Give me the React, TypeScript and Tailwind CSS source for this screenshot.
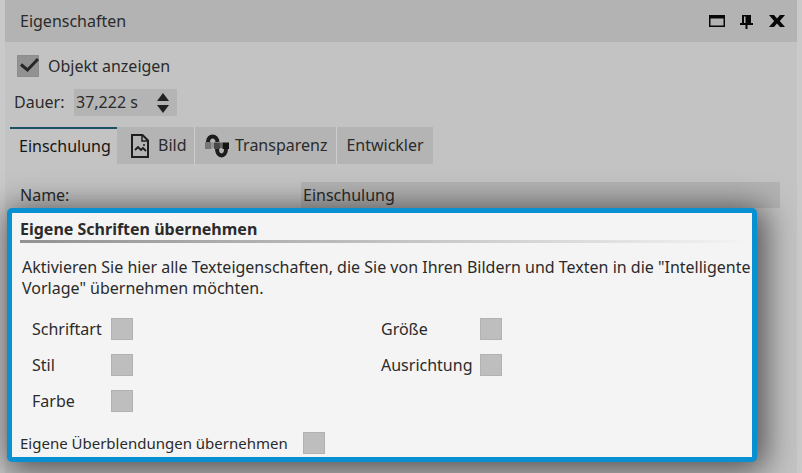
import { useState } from "react";

const boxClass =
  "size-[22px] shrink-0 appearance-none border border-[#b2b2b2] bg-[#bebebe] checked:bg-[#8c8c8c]";

function FontOption({ id, label }: { id: string; label: string }) {
  return (
    <div className="flex h-9 items-center">
      <label htmlFor={id} className="w-[79px] shrink-0 whitespace-nowrap">
        {label}
      </label>
      <input id={id} type="checkbox" className={boxClass} />
    </div>
  );
}

function AlignedOption({ id, label }: { id: string; label: string }) {
  return (
    <div className="flex h-9 items-center">
      <label htmlFor={id} className="w-[99px] shrink-0 whitespace-nowrap">
        {label}
      </label>
      <input id={id} type="checkbox" className={boxClass} />
    </div>
  );
}

function ImageFileIcon() {
  return (
    <svg width="20" height="26" viewBox="0 0 20 26" fill="none" stroke="#1e1e1e" strokeWidth="2" aria-hidden="true">
      <path d="M2 2h10.500l5.500 5.500V24H2z" />
      <path d="M12 2v6h6" strokeWidth="1.500" />
      <path d="M5 17l3-3 3 3 2-2 3 3" strokeWidth="1.800" />
      <circle cx="14" cy="12" r="1" fill="#1e1e1e" stroke="none" />
    </svg>
  );
}

function CurveIcon() {
  return (
    <svg width="24" height="24" viewBox="0 0 24 24" aria-hidden="true">
      <path d="M3 8C3 0.500 12 0.500 12.500 8" fill="none" stroke="#1c1c1c" strokeWidth="4" />
      <path d="M12 15C12 23.500 21 23.500 21 15" fill="none" stroke="#1c1c1c" strokeWidth="4" />
      <path d="M0 8h6.500v7H0z" fill="#777777" />
      <path d="M6.500 8.500h2.500v5.500H6.500z" fill="#929292" />
      <path d="M9 8.500h6V15H9z" fill="#484848" />
      <path d="M15 8.500h2.500V14H15z" fill="#666666" />
      <path d="M17.500 8.500H24V15h-6.500z" fill="#141414" />
    </svg>
  );
}

export default function App() {
  const [duration, setDuration] = useState(37222);
  const durationText = (duration / 1000).toFixed(3).replace(".", ",") + " s";

  return (
    <main className="min-h-screen overflow-hidden bg-[#c3c3c3] px-[5px] font-['Noto_Sans','Open_Sans',sans-serif] text-[16px] leading-[21px] text-[#2b2b2b] shadow-[inset_5px_0_0_#c9c9c9,inset_-5px_0_0_#cacaca]">
      <header className="flex h-[42px] items-center justify-between bg-[#b3b3b3] pr-3 pl-[15px]">
        <h1>Eigenschaften</h1>
        <div className="flex items-center">
          <button type="button" aria-label="Maximieren" className="mr-[15px]">
            <svg width="16" height="14" viewBox="0 0 16 14" aria-hidden="true">
              <path d="M0 1h16v12H0zM1.500 4.500v7h13v-7z" fill="#080808" fillRule="evenodd" />
            </svg>
          </button>
          <button type="button" aria-label="Anheften" className="mr-4">
            <svg width="13" height="15" viewBox="0 0 13 15" aria-hidden="true">
              <path d="M2 1h9v8h2v2H7.500v4h-2v-4H0V9h2zM4 2.500V9h1.500V2.500z" fill="#080808" fillRule="evenodd" />
            </svg>
          </button>
          <button type="button" aria-label="Schließen">
            <svg width="16" height="14" viewBox="0 0 16 14" aria-hidden="true">
              <path d="M0 1h5l3 3.500L11 1h5l-5.200 6 5.200 6h-5L8 9.500 5 13H0l5.200-6z" fill="#080808" />
            </svg>
          </button>
        </div>
      </header>

      <div className="flex items-center gap-[9px] pt-[13px] pl-3">
        <span className="relative flex">
          <input id="show" type="checkbox" defaultChecked className="peer size-[22px] appearance-none border border-[#8d8d8d] bg-[#929292]" />
          <svg className="pointer-events-none absolute inset-0 hidden peer-checked:block" width="22" height="22" viewBox="0 0 22 22" fill="none" stroke="#262626" strokeWidth="3" aria-hidden="true">
            <path d="M4 9.500l6.500 5.500L21 4" />
          </svg>
        </span>
        <label htmlFor="show">Objekt anzeigen</label>
      </div>

      <div className="flex items-center pt-3 pl-[9px]">
        <label htmlFor="duration" className="w-[60px]">
          Dauer:
        </label>
        <div className="flex h-[27px] w-[103px] items-center bg-[#b4b4b4]">
          <input id="duration" readOnly value={durationText} className="w-[82px] bg-transparent pl-0.5 outline-none" />
          <div className="flex flex-col gap-1">
            <button type="button" aria-label="Dauer erhöhen" onClick={() => setDuration(duration + 100)}>
              <svg width="14" height="8" viewBox="0 0 14 8" className="block" aria-hidden="true">
                <path d="M1 8l6-8 6 8z" fill="#222222" />
              </svg>
            </button>
            <button type="button" aria-label="Dauer verringern" onClick={() => setDuration(duration - 100)}>
              <svg width="14" height="8" viewBox="0 0 14 8" className="block" aria-hidden="true">
                <path d="M1 0l6 8 6-8z" fill="#222222" />
              </svg>
            </button>
          </div>
        </div>
      </div>

      <nav role="tablist" className="flex h-12 items-end pl-[5px]">
        <button type="button" role="tab" aria-selected="true" className="h-[37px] w-[107px] border-t-2 border-[#1c5068] pl-[9px] text-left text-[#151515]">
          Einschulung
        </button>
        <button type="button" role="tab" aria-selected="false" className="flex h-[37px] w-[78px] items-center gap-2 border-r border-[#cecece] bg-[#b4b4b4] pl-[13px]">
          <ImageFileIcon />
          Bild
        </button>
        <button type="button" role="tab" aria-selected="false" className="flex h-[37px] w-[142px] items-center gap-[6px] border-r border-[#cecece] bg-[#b4b4b4] pl-[10px]">
          <CurveIcon />
          Transparenz
        </button>
        <button type="button" role="tab" aria-selected="false" className="h-[37px] w-24 bg-[#b4b4b4]">
          Entwickler
        </button>
      </nav>

      <div className="mt-[18px] flex h-[26px] items-center pr-[17px] pl-[15px]">
        <label htmlFor="name" className="w-[281px] shrink-0">
          Name:
        </label>
        <input id="name" defaultValue="Einschulung" className="h-[26px] min-w-0 flex-1 bg-[#b3b3b3] pl-0.5 outline-none" />
      </div>

      <section className="relative mr-10 ml-[2px] rounded-[5px] border-[5px] border-[#0890d2] bg-[#f4f4f4] pb-[3px] shadow-[4px_4px_32px_4px_rgba(0,0,0,0.6)]">
        <h2 className="ml-2 pt-[6px] font-bold">Eigene Schriften übernehmen</h2>
        <div className="ml-2 h-[3px] bg-linear-to-r from-[#929292] to-[#f4f4f4]" />
        <p className="mt-[14px] ml-[10px]">
          Aktivieren Sie hier alle Texteigenschaften, die Sie von Ihren Bildern und Texten in die "Intelligente Vorlage" übernehmen möchten.
        </p>
        <div className="mt-3 flex pl-5">
          <div className="w-[349px]">
            <FontOption id="family" label="Schriftart" />
            <FontOption id="style" label="Stil" />
            <FontOption id="color" label="Farbe" />
          </div>
          <div>
            <AlignedOption id="size" label="Größe" />
            <AlignedOption id="align" label="Ausrichtung" />
          </div>
        </div>
        <div className="mt-[13px] flex items-center pl-2">
          <label htmlFor="fades" className="w-[283px] shrink-0 text-[15px]">
            Eigene Überblendungen übernehmen
          </label>
          <input id="fades" type="checkbox" className={boxClass} />
        </div>
      </section>
    </main>
  );
}
